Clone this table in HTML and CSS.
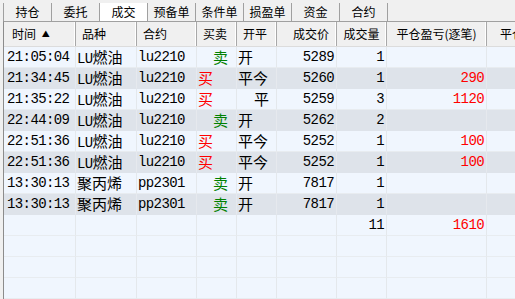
FILE: index.html
```html
<!DOCTYPE html>
<html>
<head>
<meta charset="utf-8">
<link rel="stylesheet" href="styles.css">
</head>
<body>
<div class="tabs">
  <div class="tab">持仓</div>
  <div class="tab">委托</div>
  <div class="tab active">成交</div>
  <div class="tab">预备单</div>
  <div class="tab">条件单</div>
  <div class="tab">损盈单</div>
  <div class="tab">资金</div>
  <div class="tab">合约</div>
</div>
<div class="grid">
  <div class="row head">
    <div class="c c1 hl">时间 <span class="arrow">▲</span></div>
    <div class="c hl">品种</div>
    <div class="c hl">合约</div>
    <div class="c hl">买卖</div>
    <div class="c hl">开平</div>
    <div class="c hr">成交价</div>
    <div class="c hc">成交量</div>
    <div class="c hc">平仓盈亏(逐笔)</div>
    <div class="c hlast last">平仓</div>
  </div>

  <div class="row">
    <div class="c mono t">21:05:04</div><div class="c mono v">LU<span class="cjk">燃油</span></div><div class="c mono v">lu2210</div>
    <div class="c cjk sell">卖</div><div class="c cjk o">开</div><div class="c mono n">5289</div><div class="c mono n">1</div><div class="c mono n red"></div><div class="c last"></div>
  </div>
  <div class="row alt">
    <div class="c mono t">21:34:45</div><div class="c mono v">LU<span class="cjk">燃油</span></div><div class="c mono v">lu2210</div>
    <div class="c cjk buy">买</div><div class="c cjk o">平今</div><div class="c mono n">5260</div><div class="c mono n">1</div><div class="c mono n red">290</div><div class="c last"></div>
  </div>
  <div class="row">
    <div class="c mono t">21:35:22</div><div class="c mono v">LU<span class="cjk">燃油</span></div><div class="c mono v">lu2210</div>
    <div class="c cjk buy">买</div><div class="c cjk o2">平</div><div class="c mono n">5259</div><div class="c mono n">3</div><div class="c mono n red">1120</div><div class="c last"></div>
  </div>
  <div class="row alt">
    <div class="c mono t">22:44:09</div><div class="c mono v">LU<span class="cjk">燃油</span></div><div class="c mono v">lu2210</div>
    <div class="c cjk sell">卖</div><div class="c cjk o">开</div><div class="c mono n">5262</div><div class="c mono n">2</div><div class="c mono n red"></div><div class="c last"></div>
  </div>
  <div class="row">
    <div class="c mono t">22:51:36</div><div class="c mono v">LU<span class="cjk">燃油</span></div><div class="c mono v">lu2210</div>
    <div class="c cjk buy">买</div><div class="c cjk o">平今</div><div class="c mono n">5252</div><div class="c mono n">1</div><div class="c mono n red">100</div><div class="c last"></div>
  </div>
  <div class="row alt">
    <div class="c mono t">22:51:36</div><div class="c mono v">LU<span class="cjk">燃油</span></div><div class="c mono v">lu2210</div>
    <div class="c cjk buy">买</div><div class="c cjk o">平今</div><div class="c mono n">5252</div><div class="c mono n">1</div><div class="c mono n red">100</div><div class="c last"></div>
  </div>
  <div class="row">
    <div class="c mono t">13:30:13</div><div class="c cjk v">聚丙烯</div><div class="c mono v">pp2301</div>
    <div class="c cjk sell">卖</div><div class="c cjk o">开</div><div class="c mono n">7817</div><div class="c mono n">1</div><div class="c mono n red"></div><div class="c last"></div>
  </div>
  <div class="row alt">
    <div class="c mono t">13:30:13</div><div class="c cjk v">聚丙烯</div><div class="c mono v">pp2301</div>
    <div class="c cjk sell">卖</div><div class="c cjk o">开</div><div class="c mono n">7817</div><div class="c mono n">1</div><div class="c mono n red"></div><div class="c last"></div>
  </div>
  <div class="row">
    <div class="c"></div><div class="c"></div><div class="c"></div><div class="c"></div><div class="c"></div><div class="c"></div><div class="c mono n">11</div><div class="c mono n red">1610</div><div class="c last"></div>
  </div>
  <div class="row">
    <div class="c"></div><div class="c"></div><div class="c"></div><div class="c"></div><div class="c"></div><div class="c"></div><div class="c"></div><div class="c"></div><div class="c last"></div>
  </div>
  <div class="row">
    <div class="c"></div><div class="c"></div><div class="c"></div><div class="c"></div><div class="c"></div><div class="c"></div><div class="c"></div><div class="c"></div><div class="c last"></div>
  </div>
  <div class="row">
    <div class="c"></div><div class="c"></div><div class="c"></div><div class="c"></div><div class="c"></div><div class="c"></div><div class="c"></div><div class="c"></div><div class="c last"></div>
  </div>
</div>
</body>
</html>
```

FILE: styles.css
```css
html, body {
  margin: 0;
  padding: 0;
  width: 515px;
  height: 299px;
  overflow: hidden;
  background: #f0f0f0;
  font-family: "Noto Sans CJK SC", "Liberation Sans", sans-serif;
  color: #000;
}

.tabs {
  display: flex;
  height: 21px;
  padding-left: 3px;
  box-sizing: border-box;
  padding-top: 3px;
}

.tab {
  width: 47px;
  height: 18px;
  border-left: 1px solid #a0a0a0;
  font-size: 12px;
  line-height: 18px;
  text-align: center;
  color: #000;
}
.tab:last-child {
  border-right: 1px solid #a0a0a0;
}
.tab.active {
  background: #ffffff;
}

.grid {
  margin-left: 3px;
  border-left: 1px solid #8c8c8c;
  border-top: 1px solid #a0a0a0;
  background: #f0f6fe;
}

.row {
  display: grid;
  grid-template-columns: 72px 61px 60px 40px 40px 60px 50px 100px 1fr;
  height: 21px;
  background: #f0f6fe;
}
.row.alt {
  background: #dee3ea;
}
.row.head {
  height: 25px;
  background: #f0f0f0;
  border-bottom: 1px solid #dcdcdc;
  box-sizing: border-box;
}

.c {
  border-right: 1px solid #e4e8ec;
  border-bottom: 1px solid #e8ecf0;
  box-sizing: border-box;
  white-space: nowrap;
  overflow: hidden;
  line-height: 20px;
}
.row.alt .c {
  border-right-color: #e6e9ee;
  border-bottom-color: #dee3ea;
}
.c.last {
  border-right: none;
}

.head .c {
  font-size: 12px;
  line-height: 24px;
  border-right: 1px solid #a8a8a8;
  border-bottom: none;
  box-shadow: inset -1px 0 0 #ffffff;
}
.head .c.last {
  border-right: none;
  box-shadow: none;
}
.hl { padding-left: 6px; }
.head .c1 { padding-left: 8px; }
.head .hlast { padding-left: 13px; }
.hr { text-align: right; padding-right: 7px; }
.hc { text-align: center; }
.arrow {
  font-size: 8px;
  vertical-align: 2px;
  margin-left: 3px;
}

.mono {
  font-family: "Liberation Mono", "Noto Sans CJK SC", monospace;
  font-size: 14px;
  letter-spacing: -0.6px;
}
.cjk {
  font-family: "Noto Sans CJK SC", sans-serif;
  font-size: 15px;
  letter-spacing: 0;
}
.mono .cjk {
  font-size: 15px;
}

.t { padding-left: 3px; }
.v { padding-left: 1px; }
.buy { color: #ff0000; padding-left: 1px; }
.sell { color: #008000; padding-left: 16px; }
.o { padding-left: 1px; }
.o2 { padding-left: 17px; }
.n { text-align: right; padding-right: 2px; }
.red { color: #ff0000; }
```
